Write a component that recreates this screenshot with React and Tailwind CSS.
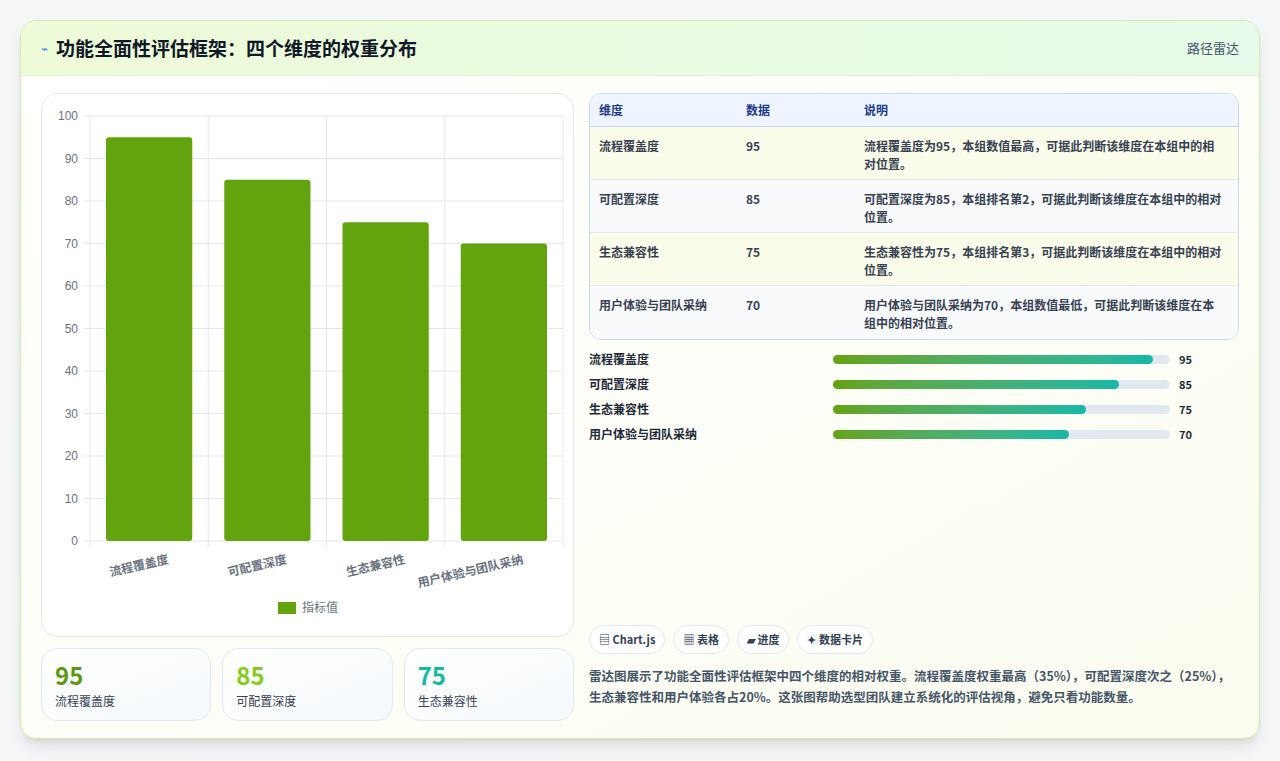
import React from 'react';

const rows = [
  { name: '流程覆盖度', v: 95, desc: '流程覆盖度为95，本组数值最高，可据此判断该维度在本组中的相对位置。' },
  { name: '可配置深度', v: 85, desc: '可配置深度为85，本组排名第2，可据此判断该维度在本组中的相对位置。' },
  { name: '生态兼容性', v: 75, desc: '生态兼容性为75，本组排名第3，可据此判断该维度在本组中的相对位置。' },
  { name: '用户体验与团队采纳', v: 70, desc: '用户体验与团队采纳为70，本组数值最低，可据此判断该维度在本组中的相对位置。' },
];

const font = { fontFamily: '"Noto Sans CJK SC", "Noto Sans", sans-serif' };

function BarChart() {
  // plot area in svg coords (card origin at 40,93)
  const x0 = 48, x1 = 521, y0 = 447, y100 = 22;
  const yOf = (v) => y0 - (v / 100) * (y0 - y100);
  const cw = (x1 - x0) / 4;
  return (
    <svg width="533" height="543" className="block">
      {[0, 10, 20, 30, 40, 50, 60, 70, 80, 90, 100].map((t) => (
        <g key={t}>
          <line x1={x0 - 6} x2={x1} y1={yOf(t)} y2={yOf(t)} stroke="#e5e7eb" />
          <text x={x0 - 12} y={yOf(t) + 4} textAnchor="end" fontSize="12" fill="#6b7280" fontFamily="Liberation Sans, sans-serif">{t}</text>
        </g>
      ))}
      {[0, 1, 2, 3, 4].map((i) => (
        <line key={i} x1={x0 + i * cw} x2={x0 + i * cw} y1={y100} y2={y0 + 6} stroke="#e5e7eb" />
      ))}
      {rows.map((r, i) => (
        <g key={r.name}>
          <rect x={x0 + i * cw + 16} y={yOf(r.v)} width={cw - 32} height={y0 - yOf(r.v)} rx="3" fill="#62a30e" />
          <text transform={`translate(${x0 + i * cw + cw / 2 + 20} ${y0 + 22}) rotate(-13)`} textAnchor="end" fontSize="12" fontWeight="600" fill="#6b7280" style={font}>{r.name}</text>
        </g>
      ))}
      <rect x="236" y="508" width="18" height="12" fill="#62a30e" />
      <text x="260" y="518" fontSize="12" fill="#6b7280" style={font}>指标值</text>
    </svg>
  );
}

export default function App() {
  return (
    <div className="min-h-screen bg-[#f5f6f7] p-5" style={font}>
      <div className="h-[719px] rounded-2xl border border-[#d5eaa6] bg-gradient-to-br from-white to-[#fbfdf0] shadow-lg overflow-hidden flex flex-col">
        <div className="h-[55px] flex items-center justify-between px-5 border-b border-[#e3efd6] bg-gradient-to-r from-[#eefbd8] to-[#e6fbe9]">
          <div className="flex items-center gap-2">
            <span className="text-[#3b82f6] text-xs">⌁</span>
            <h1 className="text-[19px] font-bold text-[#111827]">功能全面性评估框架：四个维度的权重分布</h1>
          </div>
          <span className="text-[13px] text-[#475569]">路径雷达</span>
        </div>
        <div className="flex gap-[15px] px-5 pt-[17px]">
          <div className="w-[533px] flex flex-col gap-[11px]">
            <div className="rounded-2xl border border-[#e5e7eb] bg-white h-[544px]"><BarChart /></div>
            <div className="grid grid-cols-3 gap-[11px]">
              {[['95', 'text-[#5b9a0e]', '流程覆盖度'], ['85', 'text-[#84cc16]', '可配置深度'], ['75', 'text-[#14b8a6]', '生态兼容性']].map(([n, c, l]) => (
                <div key={l} className="h-[73px] rounded-2xl border border-[#e2e8f0] bg-gradient-to-br from-white to-[#f5f9fc] px-[13px] pt-[11px]">
                  <div className={`text-[24px] font-bold leading-[30px] ${c}`}>{n}</div>
                  <div className="text-[12px] text-[#374151] mt-[2px]">{l}</div>
                </div>
              ))}
            </div>
          </div>
          <div className="flex-1 flex flex-col">
            <div className="rounded-xl border border-[#d1d9e6] overflow-hidden">
              <div className="flex h-[33px] items-center bg-[#eef5ff] border-b border-[#c9d6ea] text-[12px] font-semibold text-[#1e3a8a]">
                <div className="w-[156px] pl-[9px]">维度</div>
                <div className="w-[118px]">数据</div>
                <div className="flex-1">说明</div>
              </div>
              {rows.map((r, i) => (
                <div key={r.name} className={`flex h-[53px] pt-[10px] text-[12px] font-semibold text-[#374151] ${i % 2 === 0 ? 'bg-[#fbfdeb]' : 'bg-[#f8fafc]'} ${i < 3 ? 'border-b border-[#e2e8f0]' : ''}`}>
                  <div className="w-[156px] pl-[9px]">{r.name}</div>
                  <div className="w-[118px]">{r.v}</div>
                  <div className="flex-1 pr-3 leading-[18px]">{r.desc}</div>
                </div>
              ))}
            </div>
            <div className="flex flex-col gap-[7px] mt-[10px]">
              {rows.map((r) => (
                <div key={r.name} className="flex items-center h-[18px] text-[12px] font-semibold text-[#1f2937]">
                  <div className="w-[244px]">{r.name}</div>
                  <div className="w-[337px] h-[9px] rounded-full bg-[#e2e8f0]">
                    <div className="h-full rounded-full bg-gradient-to-r from-[#65a30d] to-[#14b8a6]" style={{ width: `${r.v}%` }} />
                  </div>
                  <div className="ml-[9px] text-[11px] font-bold">{r.v}</div>
                </div>
              ))}
            </div>
            <div className="mt-auto mb-[14px]">
              <div className="flex gap-[8px]">
                {['▤ Chart.js', '▦ 表格', '▰ 进度', '✦ 数据卡片'].map((t) => (
                  <span key={t} className="h-[29px] flex items-center px-[9px] rounded-full border border-[#e2e8f0] bg-white text-[11px] font-semibold text-[#334155]">{t}</span>
                ))}
              </div>
              <p className="mt-[11px] text-[12.5px] leading-[21px] font-semibold text-[#475569]">雷达图展示了功能全面性评估框架中四个维度的相对权重。流程覆盖度权重最高（35%），可配置深度次之（25%），生态兼容性和用户体验各占20%。这张图帮助选型团队建立系统化的评估视角，避免只看功能数量。</p>
            </div>
          </div>
        </div>
      </div>
    </div>
  );
}
